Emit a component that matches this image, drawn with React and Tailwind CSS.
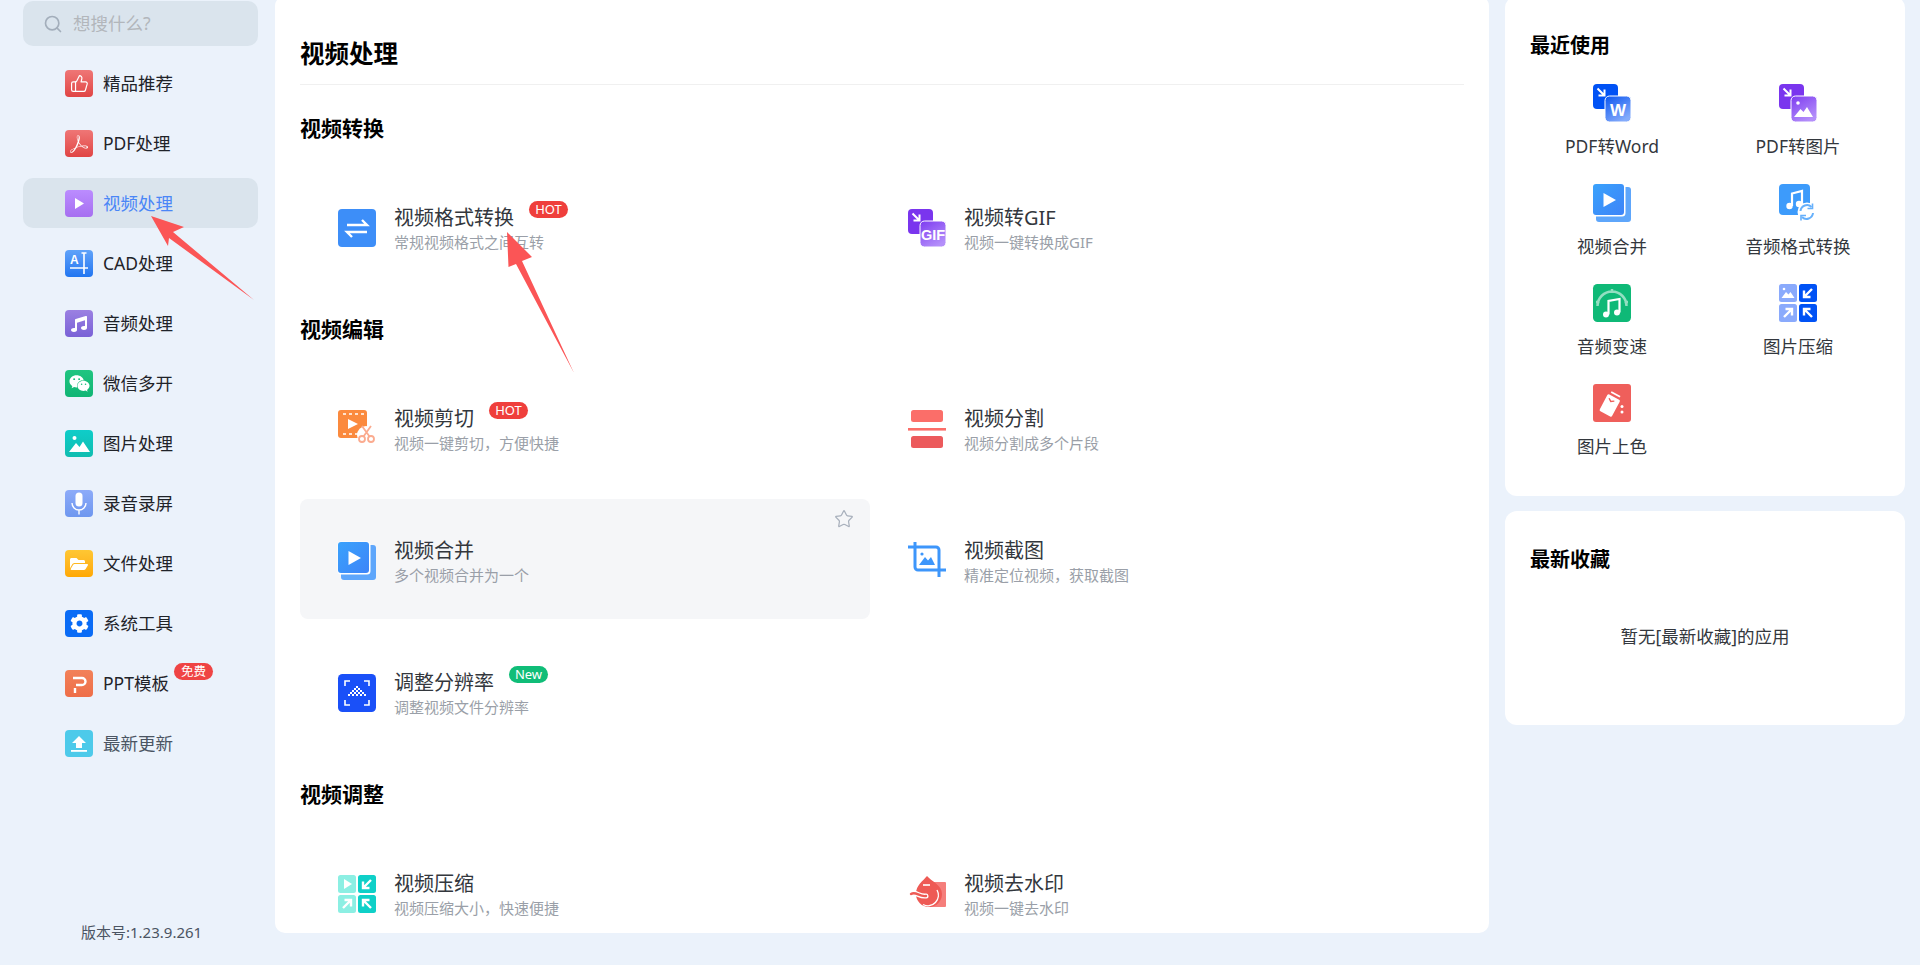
import React from 'react';
import { ThumbsUp, Star, Search } from 'lucide-react';
import { FaMusic, FaWeixin, FaFolderOpen, FaCog } from 'react-icons/fa';
import { SiAdobeacrobatreader } from 'react-icons/si';

const Box = ({ children }) => (
  <svg viewBox="0 0 38 38" className="w-[38px] h-[38px] shrink-0 overflow-visible">{children}</svg>
);

const Small = ({ children }) => (
  <svg viewBox="0 0 28 27" className="w-[28px] h-[27px]">{children}</svg>
);

// two overlapping squares: the "convert to" icons
const Overlap = ({ id, back, from, to, children }) => (
  <Box>
    <defs>
      <linearGradient id={id} x1="0" y1="0" x2="0.6" y2="1">
        <stop offset="0" stopColor={from} />
        <stop offset="1" stopColor={to} />
      </linearGradient>
    </defs>
    <rect x="0" y="0" width="25" height="25" rx="4" fill={back} />
    <path d="M4.5 4.5l6.5 6.5M11.5 5.5v6h-6" fill="none" stroke="#fff" strokeWidth="2" />
    <rect x="12" y="12" width="26" height="26" rx="4.5" fill={`url(#${id})`} stroke="#fff" strokeWidth="1" />
    {children}
  </Box>
);

// four tiles: the "compress" icons
const Quad = ({ light, dark, first }) => (
  <Box>
    <rect x="0" y="0" width="18" height="18" rx="2.5" fill={light} />
    <rect x="20" y="0" width="18" height="18" rx="2.5" fill={dark} />
    <rect x="0" y="20" width="18" height="18" rx="2.5" fill={light} />
    <rect x="20" y="20" width="18" height="18" rx="2.5" fill={dark} />
    {first}
    <path d="M33 5l-8 8M25 6.5v6.5h6.5" fill="none" stroke="#fff" strokeWidth="2.4" />
    <path d="M5 33l8-8M6.5 25h6.5v6.5" fill="none" stroke="#fff" strokeWidth="2.4" />
    <path d="M33 33l-8-8M25 31.5V25h6.5" fill="none" stroke="#fff" strokeWidth="2.4" />
  </Box>
);

const PlayStack = ({ id }) => (
  <Box>
    <defs>
      <linearGradient id={id} x1="0" y1="0" x2="1" y2="1">
        <stop offset="0" stopColor="#3aa2fc" />
        <stop offset="1" stopColor="#3d84f8" />
      </linearGradient>
    </defs>
    <rect x="3" y="3" width="35" height="35" rx="3" fill="#5ea6fb" />
    <rect x="-0.5" y="-0.5" width="33" height="33" rx="3.5" fill="#fff" />
    <rect x="0" y="0" width="31" height="31" rx="3" fill={`url(#${id})`} />
    <path d="M10.5 9l12.5 7-12.5 7z" fill="#fff" />
  </Box>
);

const sideItems = [
  { name: '精品推荐', grad: 'from-[#ef7676] to-[#e04444]', icon: <ThumbsUp size={19} strokeWidth={1.5} color="#fff" /> },
  { name: 'PDF处理', grad: 'from-[#ef7676] to-[#e04444]', icon: <SiAdobeacrobatreader size={18} color="#fff" /> },
  { name: '视频处理', grad: 'from-[#bb8cff] to-[#a66ff0]', active: true, icon: <Small><path d="M10 8l9 5.5-9 5.5z" fill="#fff" /></Small> },
  {
    name: 'CAD处理',
    grad: 'from-[#5fa2f9] to-[#2176f1]',
    icon: (
      <Small>
        <text x="5" y="14" fontSize="12" fontWeight="700" fill="#fff" fontFamily="Liberation Sans, sans-serif">A</text>
        <path d="M5 18h18M19 3v21M16.5 3h5" stroke="#fff" strokeWidth="1.6" fill="none" />
      </Small>
    ),
  },
  { name: '音频处理', grad: 'from-[#9b80e2] to-[#7a62d6]', icon: <FaMusic size={16} color="#fff" /> },
  { name: '微信多开', grad: 'from-[#20c581] to-[#10b574]', icon: <FaWeixin size={21} color="#fff" /> },
  {
    name: '图片处理',
    grad: 'from-[#0fcdc9] to-[#10bdb0]',
    icon: (
      <Small>
        <circle cx="9.5" cy="8" r="2" fill="#fff" />
        <path d="M4 22l7-9 3.5 4 3.5-5.5 7 10.5z" fill="#fff" />
      </Small>
    ),
  },
  {
    name: '录音录屏',
    grad: 'from-[#8dabf9] to-[#6e97ef]',
    icon: (
      <Small>
        <rect x="10.5" y="2.5" width="7" height="14" rx="3.5" fill="#fff" />
        <path d="M7 13a7 7 0 0 0 14 0M14 20v4.5" fill="none" stroke="#fff" strokeWidth="1.4" />
      </Small>
    ),
  },
  { name: '文件处理', grad: 'from-[#ffc733] to-[#ffa800]', icon: <FaFolderOpen size={18} color="#fff" /> },
  { name: '系统工具', grad: 'from-[#0a6cf6] to-[#0a6cf6]', icon: <FaCog size={19} color="#fff" /> },
  {
    name: 'PPT模板',
    grad: 'from-[#f28159] to-[#ee6e48]',
    badge: '免费',
    icon: (
      <Small>
        <path d="M8 8h9a3.5 3.5 0 0 1 0 7h-6M10 18v5" fill="none" stroke="#fff" strokeWidth="2.4" />
      </Small>
    ),
  },
  {
    name: '最新更新',
    grad: 'from-[#4dcaea] to-[#4dcaea]',
    muted: true,
    icon: (
      <Small>
        <path d="M14 6l7 7h-4v5h-6v-5H7z" fill="#fff" />
        <rect x="6" y="20" width="16" height="1.8" fill="#fff" />
      </Small>
    ),
  },
];

const sections = [
  {
    title: '视频转换',
    items: [
      {
        name: '视频格式转换',
        desc: '常规视频格式之间互转',
        badge: 'HOT',
        icon: (
          <Box>
            <rect width="38" height="38" rx="4" fill="#3d8ef8" />
            <path d="M9 16h20l-5-5M29 23H9l5 5" fill="none" stroke="#fff" strokeWidth="2.4" />
          </Box>
        ),
      },
      {
        name: '视频转GIF',
        desc: '视频一键转换成GIF',
        icon: (
          <Overlap id="gif" back="#7a35ee" from="#7d3bf0" to="#b48ffa">
            <text x="25" y="30.5" textAnchor="middle" fontSize="14.5" fontWeight="700" fill="#fff" fontFamily="Liberation Sans, sans-serif">GIF</text>
          </Overlap>
        ),
      },
    ],
  },
  {
    title: '视频编辑',
    items: [
      {
        name: '视频剪切',
        desc: '视频一键剪切，方便快捷',
        badge: 'HOT',
        icon: (
          <Box>
            <rect width="29" height="28" rx="3" fill="#fb8a3e" />
            <path d="M5 4h3M11 4h3M17 4h3M23 4h3M5 24h3M11 24h3M17 24h3" stroke="#fff" strokeWidth="1.6" />
            <path d="M10 9l10 5-10 5z" fill="#fff" />
            <circle cx="28" cy="25" r="9" fill="#fff" />
            <circle cx="24" cy="29" r="3" fill="none" stroke="#fbab8f" strokeWidth="1.8" />
            <circle cx="33" cy="29" r="3" fill="none" stroke="#fbab8f" strokeWidth="1.8" />
            <path d="M25.5 26.5L33 16M31.5 26.5L24 16" stroke="#fbab8f" strokeWidth="1.8" />
          </Box>
        ),
      },
      {
        name: '视频分割',
        desc: '视频分割成多个片段',
        icon: (
          <Box>
            <rect x="3" y="0" width="32" height="12" rx="2.5" fill="#fb6e69" />
            <rect x="0" y="18" width="38" height="2.6" fill="#fb6e69" />
            <rect x="3" y="26" width="32" height="12" rx="2.5" fill="#ec5a5c" />
          </Box>
        ),
      },
      {
        name: '视频合并',
        desc: '多个视频合并为一个',
        hover: true,
        icon: <PlayStack id="merge-a" />,
      },
      {
        name: '视频截图',
        desc: '精准定位视频，获取截图',
        icon: (
          <Box>
            <path d="M7 0v25a3 3 0 0 0 3 3h28M0 5h28a3 3 0 0 1 3 3v27" fill="none" stroke="#3d96fb" strokeWidth="3" />
            <circle cx="14" cy="12" r="1.6" fill="#3d96fb" />
            <path d="M11 23l6-8 3 3.5 3-3.5 4 8z" fill="#3d96fb" />
          </Box>
        ),
      },
      {
        name: '调整分辨率',
        desc: '调整视频文件分辨率',
        badge: 'New',
        badgeColor: 'bg-[#10bd78]',
        icon: (
          <Box>
            <rect width="38" height="38" rx="4.5" fill="#1a50f8" />
            <path d="M7 12V7h5M31 12V7h-5M7 26v5h5M31 26v5h-5" fill="none" stroke="#fff" strokeWidth="1.6" />
            <path d="M18 12h2v2h-2zM16 14h2v2h-2zM20 14h2v2h-2zM14 16h2v2h-2zM18 16h2v2h-2zM22 16h2v2h-2zM12 18h2v2h-2zM16 18h2v2h-2zM20 18h2v2h-2zM24 18h2v2h-2zM10 20h2v2h-2zM14 20h2v2h-2zM18 20h2v2h-2zM22 20h2v2h-2zM26 20h2v2h-2z" fill="#fff" />
          </Box>
        ),
      },
    ],
  },
  {
    title: '视频调整',
    items: [
      {
        name: '视频压缩',
        desc: '视频压缩大小，快速便捷',
        icon: <Quad light="#8cefe3" dark="#0fd0c8" first={<path d="M6 4l8 5-8 5z" fill="#fff" />} />,
      },
      {
        name: '视频去水印',
        desc: '视频一键去水印',
        icon: (
          <Box>
            <rect x="21" y="7" width="17" height="25" rx="1" fill="#f57e7b" />
            <path d="M19 1C15 6 8 10 8 19a13 13 0 0 0 26 0c0-9-11-13-15-18z" fill="#ee5a55" />
            <path d="M15 10h7" stroke="#fff" strokeWidth="1.6" />
            <path d="M29 15a10.500 10.500 0 0 1-14 14.500" fill="none" stroke="#fff" strokeWidth="1.4" />
            <path d="M3 19c5-3 8 3 15 2" fill="none" stroke="#fff" strokeWidth="5" strokeLinecap="round" />
            <path d="M3 19c5-3 8 3 15 2" fill="none" stroke="#ee5a55" strokeWidth="2.4" strokeLinecap="round" />
          </Box>
        ),
      },
    ],
  },
];

const recent = [
  {
    name: 'PDF转Word',
    icon: (
      <Overlap id="word" back="#0052f5" from="#0a55f0" to="#84abfb">
        <text x="25" y="31.500" textAnchor="middle" fontSize="17" fontWeight="700" fill="#fff" fontFamily="Liberation Sans, sans-serif">W</text>
      </Overlap>
    ),
  },
  {
    name: 'PDF转图片',
    icon: (
      <Overlap id="pic" back="#7a35ee" from="#7d3bf0" to="#b48ffa">
        <circle cx="19" cy="19" r="1.8" fill="#fff" />
        <path d="M15 33l6.500-8 3 3 3.500-5 6 10z" fill="#fff" />
      </Overlap>
    ),
  },
  { name: '视频合并', icon: <PlayStack id="merge-b" /> },
  {
    name: '音频格式转换',
    icon: (
      <Box>
        <rect width="31" height="31" rx="4" fill="#3d9bfb" />
        <circle cx="10.500" cy="22" r="3.200" fill="#fff" />
        <circle cx="20" cy="20" r="3.200" fill="#fff" />
        <path d="M13 22V9.500l10-2.500V20" fill="none" stroke="#fff" strokeWidth="2.200" />
        <circle cx="28" cy="28" r="9.500" fill="#fff" />
        <path d="M21.500 27a6.500 6.500 0 0 1 11-4M34 29a6.500 6.500 0 0 1-11 4" fill="none" stroke="#66b0fb" strokeWidth="2" />
        <path d="M33.500 19.500v5h-5M22 36.500v-5h5" fill="none" stroke="#66b0fb" strokeWidth="1.600" />
      </Box>
    ),
  },
  {
    name: '音频变速',
    icon: (
      <Box>
        <rect width="38" height="38" rx="4.500" fill="#0fb977" />
        <path d="M4.500 22a14.500 14.500 0 0 1 29 0M19 5v4M3 18h3.500M31.500 18h3.500" fill="none" stroke="#fff" strokeOpacity="0.55" strokeWidth="2.500" />
        <circle cx="13" cy="30.500" r="3" fill="#fff" />
        <circle cx="24" cy="28.500" r="3" fill="#fff" />
        <path d="M15.500 30.500V17l11-2v13.500" fill="none" stroke="#fff" strokeWidth="2.200" />
      </Box>
    ),
  },
  {
    name: '图片压缩',
    icon: (
      <Quad
        light="#8aaafc"
        dark="#0052f5"
        first={
          <g fill="#fff">
            <circle cx="5" cy="5" r="1.300" />
            <path d="M2.500 14l4.500-6 2.500 2.500 2-2.500 4 6z" />
          </g>
        }
      />
    ),
  },
  {
    name: '图片上色',
    icon: (
      <Box>
        <rect width="38" height="38" rx="3" fill="#ef5f5b" />
        <g transform="rotate(28 17 21)">
          <rect x="10" y="12" width="14" height="19" rx="1.500" fill="#fff" />
          <path d="M12 9h10" stroke="#fff" strokeWidth="1.800" />
          <path d="M13 15.500l3 2 3-2" fill="none" stroke="#ef5f5b" strokeWidth="1.400" />
        </g>
        <circle cx="29" cy="22.500" r="1.500" fill="#fff" />
        <circle cx="29" cy="28" r="1.500" fill="#fff" />
      </Box>
    ),
  },
];

function SideRow({ item }) {
  return (
    <div className={`flex items-center h-[50px] mb-[10px] pl-[42px] gap-[10px] rounded-[10px] ${item.active ? 'bg-[#dae4ed]' : ''}`}>
      <div className={`mt-[1px] w-[28px] h-[27px] flex items-center justify-center rounded-[4px] bg-linear-to-b ${item.grad}`}>
        {item.icon}
      </div>
      <span className={`relative text-[17.5px] leading-[24px] ${item.active ? 'text-[#4a86f7]' : item.muted ? 'text-[#4b5563]' : 'text-[#1f2329]'}`}>
        {item.name}
        {item.badge && (
          <span className="absolute left-full top-[-8px] ml-[5px] w-[39px] h-[17px] flex items-center justify-center rounded-full bg-[#ef4444] text-white text-[12.5px]">
            {item.badge}
          </span>
        )}
      </span>
    </div>
  );
}

function ToolCard({ item }) {
  return (
    <div className={`relative flex items-center h-[120px] pl-[38px] gap-[18px] rounded-[8px] ${item.hover ? 'bg-[#f5f6f8]' : ''}`}>
      <div className="mt-[4px]">{item.icon}</div>
      <div className="mt-[8px]">
        <div className="flex items-center h-[26px]">
          <span className="text-[20px] leading-[26px] text-[#33373d]">{item.name}</span>
          {item.badge && (
            <span className={`ml-[15px] mb-[17px] w-[39px] h-[17px] flex items-center justify-center rounded-full text-white text-[13px] ${item.badgeColor || 'bg-[#ef3f3c]'}`}>
              {item.badge}
            </span>
          )}
        </div>
        <div className="-mt-[2px] text-[15px] leading-[26px] text-[#9a9fa8]">{item.desc}</div>
      </div>
      {item.hover && (
        <Star size={20} strokeWidth={1.5} color="#a8b0bc" className="absolute top-[10px] right-[16px]" />
      )}
    </div>
  );
}

export default function App() {
  return (
    <div className="relative flex w-[1920px] h-[965px] overflow-hidden bg-[#ebf2fb] font-['Noto_Sans','Noto_Sans_CJK_SC',sans-serif]">
      {/* Sidebar */}
      <aside className="w-[275px] h-[965px] shrink-0 flex flex-col pl-[23px] pr-[17px] pt-[1px] pb-[23px]">
        <div className="flex items-center h-[45px] pl-[20px] gap-[10px] rounded-[10px] bg-[#dae4ed] mb-[12px]">
          <Search size={20} strokeWidth={2} color="#a3aebb" />
          <span className="text-[17.5px] text-[#b2b6bb]">想搜什么?</span>
        </div>
        {sideItems.map((item) => (
          <SideRow key={item.name} item={item} />
        ))}
        <div className="mt-auto pl-[58px] text-[15px] leading-[20px] text-[#4b5563] whitespace-nowrap">版本号:1.23.9.261</div>
      </aside>

      {/* Main panel */}
      <main className="w-[1214px] h-[937px] -mt-1 shrink-0 overflow-hidden rounded-[10px] bg-white px-[25px]">
        <div className="pt-[43px] pb-[15px] mb-[12px] border-b border-[#f0f0f0] text-[24.5px] leading-[30px] font-bold text-black">视频处理</div>
        {sections.map((section) => (
          <section key={section.title} className="pt-[17px]">
            <h3 className="h-[30px] leading-[28px] mb-[22px] text-[21px] font-bold text-black">{section.title}</h3>
            <div className="grid grid-cols-[570px_570px] gap-y-[12px] mb-[12px]">
              {section.items.map((item) => (
                <ToolCard key={item.name} item={item} />
              ))}
            </div>
          </section>
        ))}
      </main>

      {/* Right column */}
      <div className="w-[400px] ml-[16px] -mt-1 shrink-0 flex flex-col gap-[15px]">
        <div className="h-[500px] rounded-[12px] bg-white pt-[35px] px-[14px]">
          <h3 className="pl-[11px] text-[20px] leading-[30px] font-bold text-black mb-[23px]">最近使用</h3>
          <div className="grid grid-cols-[186px_186px] auto-rows-[100px]">
            {recent.map((item) => (
              <div key={item.name} className="flex flex-col items-center gap-[12px]">
                {item.icon}
                <span className="text-[17.5px] leading-[24px] text-[#33373d]">{item.name}</span>
              </div>
            ))}
          </div>
        </div>
        <div className="h-[214px] rounded-[12px] bg-white pt-[34px] pl-[25px]">
          <h3 className="text-[20px] leading-[30px] font-bold text-black">最新收藏</h3>
          <p className="mt-[49px] pr-[25px] text-center text-[17.5px] leading-[24px] text-[#33373d]">暂无[最新收藏]的应用</p>
        </div>
      </div>

      {/* Annotation arrows drawn over the screenshot */}
      <svg className="absolute left-0 top-0 w-[1920px] h-[965px] pointer-events-none" viewBox="0 0 1920 965">
        <path d="M151 216L184 227L173 232L254 300L169 238L168 246z" fill="#fb5556" />
        <path d="M507 232L532 257L522 261L574 373L516 264L508.5 267z" fill="#fb5556" />
      </svg>
    </div>
  );
}
